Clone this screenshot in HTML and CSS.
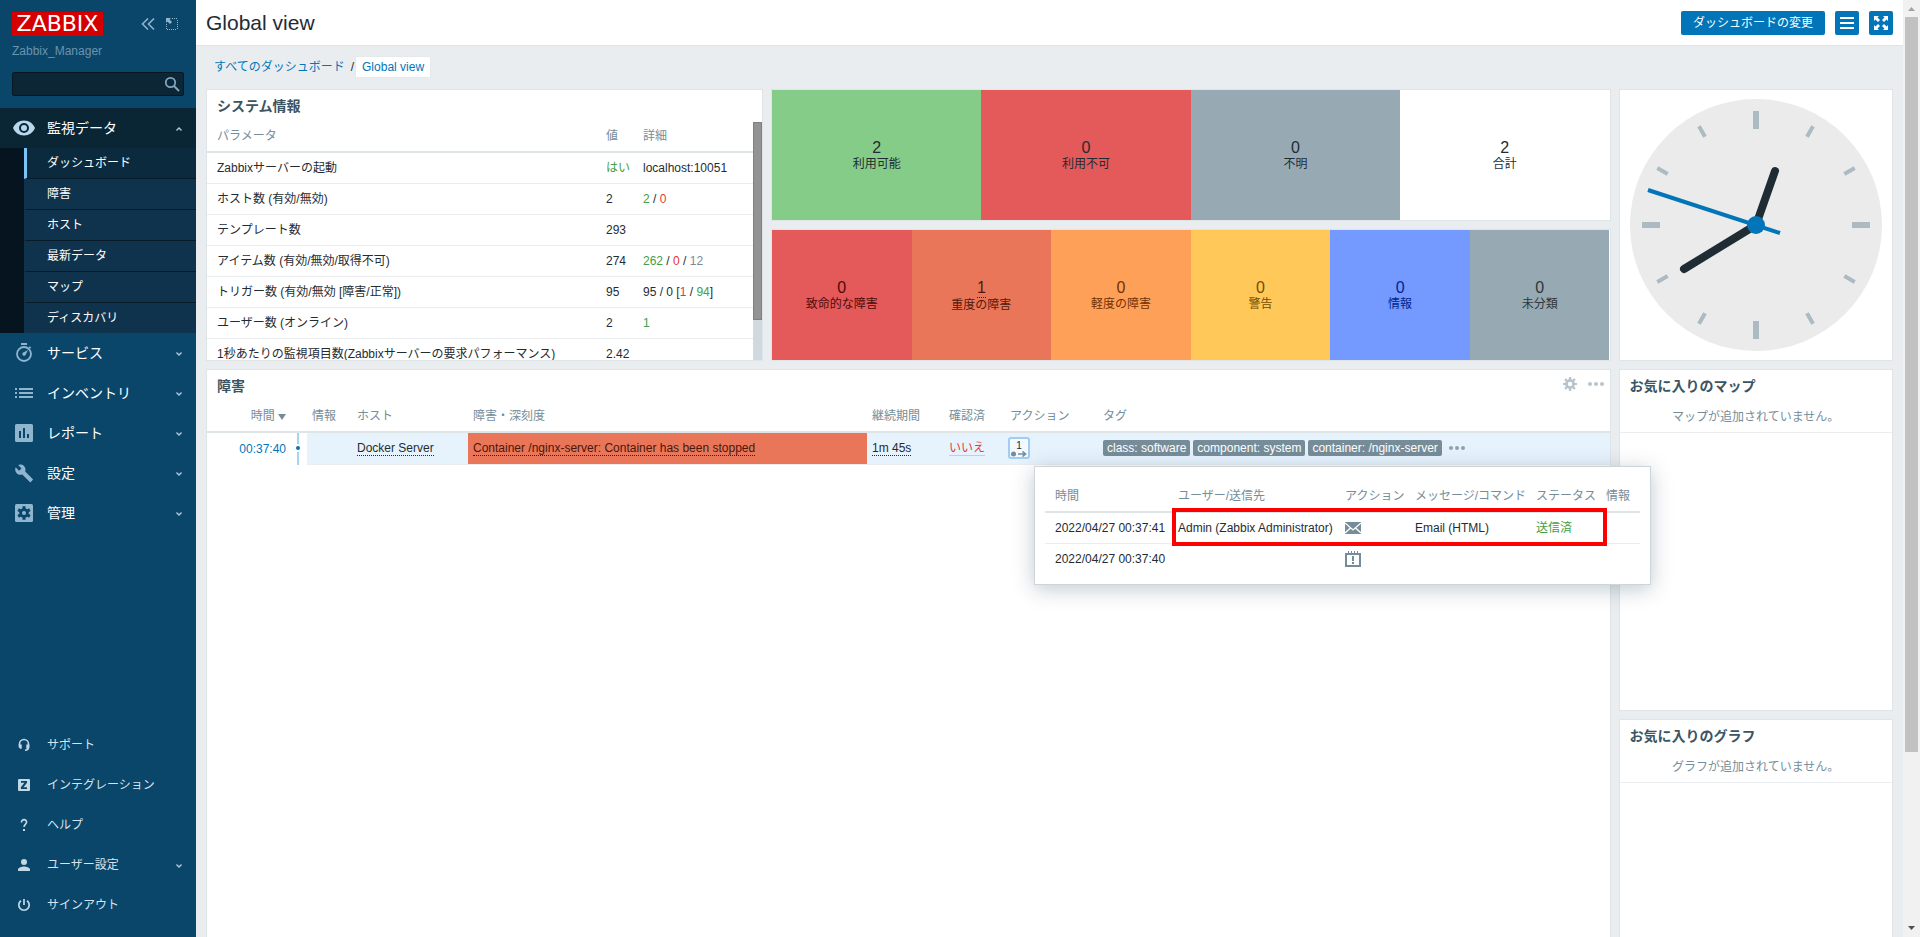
FILE: index.html
```html
<!DOCTYPE html>
<html lang="ja">
<head>
<meta charset="utf-8">
<meta name="viewport" content="width=device-width, initial-scale=1">
<title>Global view</title>
<link rel="stylesheet" href="styles.css">
</head>
<body>
<aside class="sidebar">
  <div class="brand">
    <a class="logo" href="#">ZABBIX</a>
    <div class="brand-actions">
      <button class="plain-button" type="button" aria-label="Collapse sidebar">
        <svg width="16" height="14" viewBox="0 0 16 14"><path d="M8 1.500L2.500 7L8 12.500M14 1.500L8.500 7L14 12.500" fill="none" stroke="currentColor" stroke-width="1.600"/></svg>
      </button>
      <button class="plain-button" type="button" aria-label="Hide sidebar">
        <svg width="14" height="14" viewBox="0 0 14 14"><path d="M7 1.500h6M12.500 3v9M2 12.500h10M1.500 7v5" fill="none" stroke="currentColor" stroke-dasharray="1 1"/><path d="M1 1h5L4.500 2.500L7 5L5 7L2.500 4.500L1 6z" fill="currentColor"/></svg>
      </button>
    </div>
  </div>
  <div class="server-name">Zabbix_Manager</div>
  <form class="search">
    <input class="search-input" type="text" aria-label="検索">
    <button class="search-button" type="button" aria-label="検索">
      <svg width="16" height="16" viewBox="0 0 16 16" fill="none" stroke="currentColor"><circle cx="6.500" cy="6.500" r="4.700" stroke-width="1.800"/><path d="M10 10l5 5" stroke-width="2"/></svg>
    </button>
  </form>
  <nav class="menu">
    <a class="menu-item is-open" href="#">
      <svg class="menu-icon" width="24" height="24" viewBox="0 0 24 24"><path d="M12 4.500C7 4.500 2.700 7.600 1 12c1.700 4.400 6 7.500 11 7.500s9.300-3.100 11-7.500c-1.700-4.400-6-7.500-11-7.500zM12 17a5 5 0 1 1 0-10 5 5 0 0 1 0 10zm0-8a3 3 0 1 0 0 6 3 3 0 0 0 0-6z" fill="currentColor"/></svg>
      <span class="menu-label">監視データ</span>
      <svg class="chevron" width="8" height="8" viewBox="0 0 8 8"><path d="M1.500 6.500L4 4l2.500 2.500" fill="none" stroke="currentColor" stroke-width="1.300"/></svg>
    </a>
    <ul class="submenu">
      <li><a class="submenu-item is-selected" href="#">ダッシュボード</a></li>
      <li><a class="submenu-item" href="#">障害</a></li>
      <li><a class="submenu-item" href="#">ホスト</a></li>
      <li><a class="submenu-item" href="#">最新データ</a></li>
      <li><a class="submenu-item" href="#">マップ</a></li>
      <li><a class="submenu-item" href="#">ディスカバリ</a></li>
    </ul>
    <a class="menu-item" href="#">
      <svg class="menu-icon" width="24" height="24" viewBox="0 0 24 24"><circle cx="12" cy="13" r="7" fill="none" stroke="currentColor" stroke-width="1.800"/><path d="M9 2h6v2H9zM17.800 5.200l1.400 1.400-1.200 1.200-1.400-1.400zM16 9l-2.600 5.200a1.700 1.700 0 1 1-2.600-2.500z" fill="currentColor"/></svg>
      <span class="menu-label">サービス</span>
      <svg class="chevron" width="8" height="8" viewBox="0 0 8 8"><path d="M1.500 3.500L4 6l2.500-2.500" fill="none" stroke="currentColor" stroke-width="1.300"/></svg>
    </a>
    <a class="menu-item" href="#">
      <svg class="menu-icon" width="24" height="24" viewBox="0 0 24 24"><path d="M3 7h2v2H3zM7 7h14v2H7zM3 11h2v2H3zM7 11h14v2H7zM3 15h2v2H3zM7 15h14v2H7z" fill="currentColor"/></svg>
      <span class="menu-label">インベントリ</span>
      <svg class="chevron" width="8" height="8" viewBox="0 0 8 8"><path d="M1.500 3.500L4 6l2.500-2.500" fill="none" stroke="currentColor" stroke-width="1.300"/></svg>
    </a>
    <a class="menu-item" href="#">
      <svg class="menu-icon" width="24" height="24" viewBox="0 0 24 24"><path fill-rule="evenodd" d="M4.500 3h15A1.500 1.500 0 0 1 21 4.500v15a1.500 1.500 0 0 1-1.500 1.500h-15A1.500 1.500 0 0 1 3 19.500v-15A1.500 1.500 0 0 1 4.500 3zM7 10v7h2v-7zM11 7v10h2V7zM15 13v4h2v-4z" fill="currentColor"/></svg>
      <span class="menu-label">レポート</span>
      <svg class="chevron" width="8" height="8" viewBox="0 0 8 8"><path d="M1.500 3.500L4 6l2.500-2.500" fill="none" stroke="currentColor" stroke-width="1.300"/></svg>
    </a>
    <a class="menu-item" href="#">
      <svg class="menu-icon" width="24" height="24" viewBox="0 0 24 24"><path d="M20.700 18.100l-7.500-7.500c.7-1.900.3-4.100-1.200-5.600C10.400 3.400 8 3.100 6.100 4l3.400 3.400-2.400 2.300L3.700 6.300C2.700 8.300 3.100 10.600 4.700 12.200c1.500 1.500 3.700 1.900 5.600 1.200l7.500 7.500c.3.300.8.300 1.100 0l1.800-1.800c.4-.2.400-.7 0-1z" fill="currentColor"/></svg>
      <span class="menu-label">設定</span>
      <svg class="chevron" width="8" height="8" viewBox="0 0 8 8"><path d="M1.500 3.500L4 6l2.500-2.500" fill="none" stroke="currentColor" stroke-width="1.300"/></svg>
    </a>
    <a class="menu-item" href="#">
      <svg class="menu-icon" width="24" height="24" viewBox="0 0 24 24"><rect x="3" y="3" width="18" height="18" rx="1.500" fill="currentColor"/><g class="icon-cutout"><circle cx="12" cy="12" r="4.800"/><path d="M10.500 5.200h3v13.600h-3zM17.100 7.300l1.500 2.600-11.700 6.800-1.500-2.600zM18.600 14.100l-1.500 2.600L5.400 9.900l1.500-2.600z"/></g><circle cx="12" cy="12" r="2" fill="currentColor"/></svg>
      <span class="menu-label">管理</span>
      <svg class="chevron" width="8" height="8" viewBox="0 0 8 8"><path d="M1.500 3.500L4 6l2.500-2.500" fill="none" stroke="currentColor" stroke-width="1.300"/></svg>
    </a>
  </nav>
  <nav class="menu-footer">
    <a class="menu-item is-small" href="#">
      <svg class="menu-icon" width="24" height="24" viewBox="0 0 24 24"><path d="M7.500 12.500v-1.500a4.500 4.500 0 0 1 9 0v3.500q0 2.600-3.500 2.800" fill="none" stroke="currentColor" stroke-width="1.600"/><path d="M6.700 11.500h3v4.200H8.200L6.700 14.200zM14.300 11.500h3v3l-1.500 1.200h-1.500z" fill="currentColor"/></svg>
      <span class="menu-label">サポート</span>
    </a>
    <a class="menu-item is-small" href="#">
      <svg class="menu-icon" width="24" height="24" viewBox="0 0 24 24"><rect x="6" y="6" width="12" height="12" rx="1" fill="currentColor"/><path d="M9 8h6v1.800l-3.500 4.500H15V16H8.900v-1.800l3.500-4.500H9z" class="icon-cutout"/></svg>
      <span class="menu-label">インテグレーション</span>
    </a>
    <a class="menu-item is-small" href="#">
      <svg class="menu-icon" width="24" height="24" viewBox="0 0 24 24"><path d="M9.500 9.500c-.2-4 5.400-3.500 5 0-.2 1.700-2.500 2.200-2.500 4.500" fill="none" stroke="currentColor" stroke-width="1.700"/><path d="M11 16h2v2h-2z" fill="currentColor"/></svg>
      <span class="menu-label">ヘルプ</span>
    </a>
    <a class="menu-item is-small" href="#">
      <svg class="menu-icon" width="24" height="24" viewBox="0 0 24 24"><circle cx="12" cy="9" r="3" fill="currentColor"/><path d="M6 18v-1.500c0-2 4-3 6-3s6 1 6 3V18z" fill="currentColor"/></svg>
      <span class="menu-label">ユーザー設定</span>
      <svg class="chevron" width="8" height="8" viewBox="0 0 8 8"><path d="M1.500 3.500L4 6l2.500-2.500" fill="none" stroke="currentColor" stroke-width="1.300"/></svg>
    </a>
    <a class="menu-item is-small" href="#">
      <svg class="menu-icon" width="24" height="24" viewBox="0 0 24 24"><path d="M9 7.800a5.200 5.200 0 1 0 6 0M12 6v6" fill="none" stroke="currentColor" stroke-width="1.700"/></svg>
      <span class="menu-label">サインアウト</span>
    </a>
  </nav>
</aside>

<main class="page">
  <header class="page-header">
    <h1 class="page-title">Global view</h1>
    <div class="page-actions">
      <button class="button" type="button">ダッシュボードの変更</button>
      <button class="button button-icon" type="button" aria-label="アクション">
        <svg width="14" height="12" viewBox="0 0 14 12"><path d="M0 0h14v2H0zM0 5h14v2H0zM0 10h14v2H0z" fill="currentColor"/></svg>
      </button>
      <button class="button button-icon" type="button" aria-label="キオスクモード">
        <svg width="14" height="14" viewBox="0 0 14 14"><path d="M0 0h5L3.500 1.500L6 4L4 6L1.500 3.500L0 5zM14 0v5L12.500 3.500L10 6L8 4L10.500 1.500L9 0zM0 14V9L1.500 10.500L4 8L6 10L3.500 12.500L5 14zM14 14H9L10.500 12.500L8 10L10 8L12.500 10.500L14 9z" fill="currentColor"/></svg>
      </button>
    </div>
  </header>

  <nav class="breadcrumb">
    <a class="breadcrumb-link" href="#">すべてのダッシュボード</a>
    <span class="breadcrumb-separator">/</span>
    <a class="breadcrumb-current" href="#">Global view</a>
  </nav>

  <div class="dashboard">
    <section class="widget widget-system">
      <h4 class="widget-title">システム情報</h4>
      <div class="system-body">
        <table class="list system-table">
          <colgroup><col><col class="col-value"><col class="col-details"></colgroup>
          <thead><tr><th>パラメータ</th><th>値</th><th>詳細</th></tr></thead>
          <tbody>
            <tr><td>Zabbixサーバーの起動</td><td class="green">はい</td><td>localhost:10051</td></tr>
            <tr><td>ホスト数 (有効/無効)</td><td>2</td><td><span class="green">2</span> / <span class="red">0</span></td></tr>
            <tr><td>テンプレート数</td><td>293</td><td></td></tr>
            <tr><td>アイテム数 (有効/無効/取得不可)</td><td>274</td><td><span class="green">262</span> / <span class="red">0</span> / <span class="grey">12</span></td></tr>
            <tr><td>トリガー数 (有効/無効 [障害/正常])</td><td>95</td><td>95 / 0 [<span class="red">1</span> / <span class="green">94</span>]</td></tr>
            <tr><td>ユーザー数 (オンライン)</td><td>2</td><td class="green">1</td></tr>
            <tr><td>1秒あたりの監視項目数(Zabbixサーバーの要求パフォーマンス)</td><td>2.42</td><td></td></tr>
          </tbody>
        </table>
        <div class="inner-scrollbar"><div class="inner-thumb"></div></div>
      </div>
    </section>

    <section class="widget widget-hosts tiles">
      <div class="tile tile-available"><span class="tile-count">2</span><span>利用可能</span></div>
      <div class="tile tile-unavailable"><span class="tile-count">0</span><span>利用不可</span></div>
      <div class="tile tile-unknown"><span class="tile-count">0</span><span>不明</span></div>
      <div class="tile"><span class="tile-count">2</span><span>合計</span></div>
    </section>

    <section class="widget widget-severity tiles">
      <div class="tile tile-disaster"><span class="tile-count">0</span><span>致命的な障害</span></div>
      <div class="tile tile-high"><a class="tile-count tile-link" href="#">1</a><span>重度の障害</span></div>
      <div class="tile tile-average"><span class="tile-count">0</span><span>軽度の障害</span></div>
      <div class="tile tile-warning"><span class="tile-count">0</span><span>警告</span></div>
      <div class="tile tile-info"><span class="tile-count">0</span><span>情報</span></div>
      <div class="tile tile-unclassified"><span class="tile-count">0</span><span>未分類</span></div>
    </section>

    <section class="widget widget-clock">
      <svg class="clock" viewBox="-126 -126 252 252" role="img" aria-label="時計">
        <circle r="126" fill="#ebebeb"/>
        <g stroke="#acbbc2" stroke-width="6"><path d="M0-114V-96M0 96V114M-114 0H-96M96 0H114"/></g>
        <g stroke="#acbbc2" stroke-width="4">
          <path d="M0-114V-102M0 102V114" transform="rotate(30)"/>
          <path d="M0-114V-102M0 102V114" transform="rotate(60)"/>
          <path d="M0-114V-102M0 102V114" transform="rotate(120)"/>
          <path d="M0-114V-102M0 102V114" transform="rotate(150)"/>
        </g>
        <path d="M0 0L19-54M0 0L-72 44" stroke="#1f2c33" stroke-width="8" stroke-linecap="round"/>
        <path d="M24 8L-108-35" stroke="#0275b8" stroke-width="4"/>
        <circle r="9" fill="#0275b8"/>
      </svg>
    </section>

    <section class="widget widget-problems">
      <div class="widget-head">
        <h4 class="widget-title">障害</h4>
        <div class="widget-actions">
          <button class="plain-button" type="button" aria-label="編集">
            <svg width="14" height="14" viewBox="0 0 14 14" fill="none" stroke="currentColor"><circle cx="7" cy="7" r="3.600" stroke-width="2.800"/><path d="M7 0v3M7 11v3M0 7h3M11 7h3M2 2l2.200 2.200M9.800 9.800L12 12M12 2L9.800 4.200M4.200 9.800L2 12" stroke-width="2.200"/></svg>
          </button>
          <button class="plain-button" type="button" aria-label="メニュー">
            <svg width="16" height="4" viewBox="0 0 16 4" fill="currentColor"><circle cx="2" cy="2" r="2"/><circle cx="8" cy="2" r="2"/><circle cx="14" cy="2" r="2"/></svg>
          </button>
        </div>
      </div>
      <table class="list problems-table">
        <colgroup><col class="col-time"><col class="col-line"><col class="col-info"><col class="col-host"><col class="col-problem"><col class="col-duration"><col class="col-ack"><col class="col-action"><col></colgroup>
        <thead><tr>
          <th class="align-right">時間 <svg width="8" height="6" viewBox="0 0 8 6"><path d="M0 0h8L4 6z" fill="currentColor"/></svg></th>
          <th></th><th>情報</th><th>ホスト</th><th>障害・深刻度</th><th>継続期間</th><th>確認済</th><th>アクション</th><th>タグ</th>
        </tr></thead>
        <tbody><tr>
          <td class="time-cell"><a class="link" href="#">00:37:40</a></td>
          <td class="line-cell"><svg width="4" height="32" viewBox="0 0 4 32"><path d="M2 0v11M2 19v13" stroke="#a8d5ee" stroke-width="2"/><circle cx="2" cy="15" r="2" fill="#0275b8"/></svg></td>
          <td class="hover-cell"></td>
          <td class="hover-cell"><a class="dotted" href="#">Docker Server</a></td>
          <td class="problem-cell"><a class="dotted" href="#">Container /nginx-server: Container has been stopped</a></td>
          <td class="hover-cell"><a class="dotted" href="#">1m 45s</a></td>
          <td class="hover-cell"><a class="ack-link" href="#">いいえ</a></td>
          <td class="hover-cell action-cell">
            <button class="action-button" type="button"><span>1</span>
              <svg width="16" height="6" viewBox="0 0 16 6"><circle cx="2.500" cy="3" r="2.500" fill="#768d99"/><path d="M7 3h7M11.500 0.500L14.500 3L11.500 5.500" fill="none" stroke="#768d99" stroke-width="1.600"/></svg>
            </button>
            <div class="popup">
              <table class="list popup-table">
                <colgroup><col class="pop-time"><col class="pop-user"><col class="pop-action"><col class="pop-message"><col class="pop-status"><col class="pop-info"></colgroup>
                <thead><tr><th>時間</th><th>ユーザー/送信先</th><th>アクション</th><th>メッセージ/コマンド</th><th>ステータス</th><th>情報</th></tr></thead>
                <tbody>
                  <tr><td>2022/04/27 00:37:41</td><td>Admin (Zabbix Administrator)</td>
                    <td><svg width="16" height="12" viewBox="0 0 16 12"><rect width="16" height="12" fill="#768d99"/><path d="M0 1L8 8L16 1M0 11L5.500 6M16 11L10.500 6" fill="none" stroke="#fff" stroke-width="1.300"/></svg></td>
                    <td>Email (HTML)</td><td class="green">送信済</td><td></td></tr>
                  <tr><td>2022/04/27 00:37:40</td><td></td>
                    <td><svg width="16" height="16" viewBox="0 0 16 16"><path d="M1 3h14v12H1z" fill="none" stroke="#768d99" stroke-width="2"/><path d="M3 0h1v3H3zM6 0h1v3H6zM9 0h1v3H9zM12 0h1v3h-1zM7 5h2v5H7zM7 11h2v2H7z" fill="#768d99"/></svg></td>
                    <td></td><td></td><td></td></tr>
                </tbody>
              </table>
              <div class="highlight"></div>
            </div>
          </td>
          <td class="hover-cell">
            <div class="tags"><span class="tag">class: software</span><span class="tag">component: system</span><span class="tag">container: /nginx-server</span>
              <button class="plain-button tags-more" type="button" aria-label="その他のタグ"><svg width="16" height="4" viewBox="0 0 16 4" fill="currentColor"><circle cx="2" cy="2" r="2"/><circle cx="8" cy="2" r="2"/><circle cx="14" cy="2" r="2"/></svg></button>
            </div>
          </td>
        </tr></tbody>
      </table>
    </section>

    <section class="widget widget-maps">
      <h4 class="widget-title">お気に入りのマップ</h4>
      <p class="empty">マップが追加されていません。</p>
    </section>
    <section class="widget widget-graphs">
      <h4 class="widget-title">お気に入りのグラフ</h4>
      <p class="empty">グラフが追加されていません。</p>
    </section>
  </div>
</main>

<div class="scrollbar">
  <svg width="17" height="17" viewBox="0 0 17 17"><path d="M5 11h7L8.500 7z" fill="#a3a3a3"/></svg>
  <div class="scroll-track"><div class="scroll-thumb"></div></div>
  <svg width="17" height="17" viewBox="0 0 17 17"><path d="M5 6h7L8.500 10z" fill="#505050"/></svg>
</div>
</body>
</html>
```

FILE: styles.css
```css
* {
  box-sizing: border-box;
}

body {
  display: flex;
  height: 100vh;
  margin: 0;
  overflow: hidden;
  background: #e9edf0;
  color: #1f2c33;
  font: 12px/14px "Liberation Sans", "Noto Sans CJK JP", sans-serif;
}

a {
  color: inherit;
  text-decoration: none;
}

button,
input {
  font: inherit;
}

svg {
  display: block;
  flex: none;
}

.plain-button {
  display: flex;
  padding: 0;
  border: 0;
  background: none;
  color: inherit;
}

/* Sidebar */

.sidebar {
  display: flex;
  flex: none;
  flex-direction: column;
  width: 196px;
  padding: 12px 0;
  background: #0a466a;
}

.brand {
  display: flex;
  align-items: center;
  justify-content: space-between;
  padding: 0 17px 0 12px;
}

.logo {
  width: 91px;
  background: #d40000;
  color: #fff;
  font: 22px/24px "DejaVu Sans", sans-serif;
  text-align: center;
}

.brand-actions {
  display: flex;
  gap: 9px;
  color: #8fb5cf;
}

.server-name {
  padding: 8px 12px 0;
  color: #6a93ad;
}

.search {
  display: flex;
  align-items: center;
  height: 24px;
  margin: 14px 12px 12px;
  border: 1px solid #051822;
  border-radius: 2px;
  background: #0c2635;
}

.search-input {
  flex: 1;
  min-width: 0;
  padding: 0 6px;
  border: 0;
  background: none;
  color: #fff;
}

.search-button {
  padding: 0 3px;
  border: 0;
  background: none;
  color: #7ea6c0;
}

.menu {
  flex: 1;
}

.menu-item {
  display: flex;
  align-items: center;
  gap: 11px;
  height: 40px;
  padding: 0 12px;
  color: #fff;
  font-size: 14px;
}

.menu-icon {
  color: #8fb5cf;
}

.icon-cutout {
  fill: #0a466a;
}

.menu-label {
  flex: 1;
}

.chevron {
  margin-right: 1px;
  color: #b4cede;
}

.is-open {
  background: #0a2635;
}

.is-open .menu-icon {
  color: #b8d8ee;
}

.is-small {
  color: #d5e4ee;
  font-size: 12px;
}

.is-small .menu-icon {
  color: #c3d8e5;
}

.submenu {
  margin: 0;
  padding: 0 0 0 24px;
  background: #05141e;
  list-style: none;
}

.submenu-item {
  display: block;
  padding: 8px 20px;
  border-bottom: 1px solid #071a28;
  border-left: 3px solid #10334d;
  background: #10334d;
  color: #fff;
}

.submenu-item.is-selected {
  border-left-color: #78c4f8;
  background: #0c2a3d;
}

li:last-child .submenu-item {
  border-bottom: 0;
}

/* Page */

.page {
  flex: 1;
  min-width: 0;
  overflow: hidden;
}

.page-header {
  display: flex;
  align-items: center;
  justify-content: space-between;
  height: 46px;
  padding: 0 10px;
  border-bottom: 1px solid #dfe4e7;
  background: #fff;
}

.page-title {
  margin: 0;
  font-size: 21px;
  font-weight: normal;
  line-height: 24px;
}

.page-actions {
  display: flex;
  gap: 10px;
}

.button {
  display: flex;
  align-items: center;
  justify-content: center;
  height: 24px;
  padding: 0 12px;
  border: 0;
  border-radius: 2px;
  background: #0275b8;
  color: #fff;
}

.button-icon {
  width: 24px;
  padding: 0;
}

.breadcrumb {
  display: flex;
  align-items: center;
  padding: 11px 18px 12px;
}

.breadcrumb-link {
  color: #0275b8;
}

.breadcrumb-separator {
  padding: 0 2px 0 6px;
}

.breadcrumb-current {
  padding: 3px 6px;
  background: #fff;
  box-shadow: 0 0 1px #ccd5d9;
  color: #0275b8;
}

.dashboard {
  display: grid;
  grid-template-columns: repeat(24, minmax(0, 1fr));
  grid-auto-rows: 62px;
  gap: 8px;
  padding: 0 10px;
}

.widget {
  min-width: 0;
  border: 1px solid #dfe4e7;
  background: #fff;
}

.widget-system {
  grid-area: 1 / 1 / span 4 / span 8;
  display: flex;
  flex-direction: column;
}

.widget-hosts {
  grid-area: 1 / 9 / span 2 / span 12;
}

.widget-severity {
  grid-area: 3 / 9 / span 2 / span 12;
}

.widget-clock {
  grid-area: 1 / 21 / span 4 / span 4;
  display: flex;
  justify-content: center;
  padding: 9px;
}

.widget-problems {
  grid-area: 5 / 1 / span 10 / span 20;
}

.widget-maps {
  grid-area: 5 / 21 / span 5 / span 4;
}

.widget-graphs {
  grid-area: 10 / 21 / span 5 / span 4;
}

.clock {
  height: 100%;
}

.widget-title {
  margin: 0;
  padding: 8px 10px;
  color: #3c5563;
  font-size: 14px;
  line-height: 16px;
}

.widget-head {
  display: flex;
  justify-content: space-between;
}

.widget-actions {
  display: flex;
  align-items: center;
  gap: 11px;
  padding: 0 6px 4px 0;
  color: #b8c4cb;
}

.empty {
  margin: 0;
  padding: 8px 10px;
  border-bottom: 1px solid #ebeef0;
  color: #768d99;
  text-align: center;
}

/* Host availability and severity tiles */

.tiles {
  display: flex;
}

.tile {
  display: flex;
  flex: 1;
  flex-direction: column;
  align-items: center;
  justify-content: center;
}

.tile-count {
  font-size: 16px;
  line-height: 18px;
}

.tile-link {
  border-bottom: 1px dotted currentColor;
}

.tile-available {
  background: #86cc89;
}

.tile-unavailable {
  background: #e45959;
}

.tile-unknown {
  background: #97aab3;
}

.tile-disaster {
  background: #e45959;
  color: #4b0c0c;
}

.tile-high {
  background: #e97659;
  color: #52190b;
}

.tile-average {
  background: #ffa059;
  color: #733100;
}

.tile-warning {
  background: #ffc859;
  color: #734d00;
}

.tile-info {
  background: #7499ff;
  color: #00268e;
}

.tile-unclassified {
  background: #97aab3;
  color: #2c363c;
}

/* Tables */

.list {
  width: 100%;
  border-collapse: separate;
  border-spacing: 0;
  table-layout: fixed;
}

.list th,
.list td {
  height: 31px;
  padding: 0 5px 1px;
  border-bottom: 1px solid #ebeef0;
  font-weight: normal;
  text-align: left;
  white-space: nowrap;
}

.list th {
  border-bottom: 2px solid #dfe4e7;
  color: #768d99;
}

.list th:first-child,
.list td:first-child {
  padding-left: 10px;
}

.list .align-right,
.list .time-cell {
  text-align: right;
}

.align-right svg {
  display: inline-block;
}

.green {
  color: #429e47;
}

.red {
  color: #e33734;
}

.grey {
  color: #768d99;
}

.link {
  color: #0275b8;
}

.system-body {
  display: flex;
  flex: 1;
  align-items: flex-start;
  min-height: 0;
  overflow: hidden;
}

.system-table {
  flex: 1;
}

.col-value {
  width: 37px;
}

.col-details {
  width: 115px;
}

.inner-scrollbar {
  flex: none;
  width: 9px;
  height: 100%;
  background: #d1d9e0;
}

.inner-thumb {
  height: 83%;
  border: 1px solid #808080;
  background: #939393;
}

.col-time {
  width: 84px;
}

.col-line {
  width: 16px;
}

.col-info {
  width: 45px;
}

.col-host {
  width: 116px;
}

.col-problem {
  width: 399px;
}

.col-duration {
  width: 77px;
}

.col-ack {
  width: 61px;
}

.col-action {
  width: 93px;
}

.list .time-cell,
.list .line-cell {
  border-bottom: 0;
}

.list .line-cell {
  padding: 0 5px;
  line-height: 0;
  vertical-align: top;
}

.list .hover-cell {
  background: #e6f3fd;
}

.problem-cell {
  background: #e97659;
  color: #4a170a;
}

.dotted {
  border-bottom: 1px dotted currentColor;
}

.ack-link {
  border-bottom: 1px solid #c3cfd9;
  color: #e33734;
}

.list .action-cell {
  position: relative;
  padding: 0 3px 1px;
}

.action-button {
  display: flex;
  flex-direction: column;
  align-items: center;
  width: 22px;
  height: 22px;
  padding: 1px 0 0;
  border: 2px solid #9fcdf3;
  border-radius: 3px;
  background: #f3f9fe;
  color: #1f2c33;
  font-size: 10px;
  line-height: 11px;
}

.tags {
  display: flex;
  align-items: center;
  gap: 3px;
}

.tag {
  padding: 1px 4px;
  border-radius: 2px;
  background: #768d99;
  color: #fff;
}

.tags-more {
  margin-left: 4px;
  color: #8fa3ae;
}

/* Action history popup */

.popup {
  position: absolute;
  z-index: 1;
  top: 33px;
  left: 29px;
  width: 617px;
  padding: 15px 10px 9px;
  border: 1px solid #ccd5d9;
  background: #fff;
  box-shadow: 0 4px 20px rgba(0, 40, 60, 0.25);
}

.popup-table tbody tr:last-child td {
  border-bottom: 0;
}

.pop-time {
  width: 128px;
}

.pop-user {
  width: 167px;
}

.pop-action {
  width: 70px;
}

.pop-message {
  width: 121px;
}

.pop-status {
  width: 70px;
}

.highlight {
  position: absolute;
  top: 41px;
  right: 43px;
  left: 137px;
  height: 38px;
  border: 4px solid #f00;
}

/* Window scrollbar */

.scrollbar {
  display: flex;
  flex: none;
  flex-direction: column;
  width: 17px;
  background: #f1f1f1;
}

.scroll-track {
  flex: 1;
  padding: 0 2px;
}

.scroll-thumb {
  height: calc(81% + 4px);
  background: #c1c1c1;
}
```
